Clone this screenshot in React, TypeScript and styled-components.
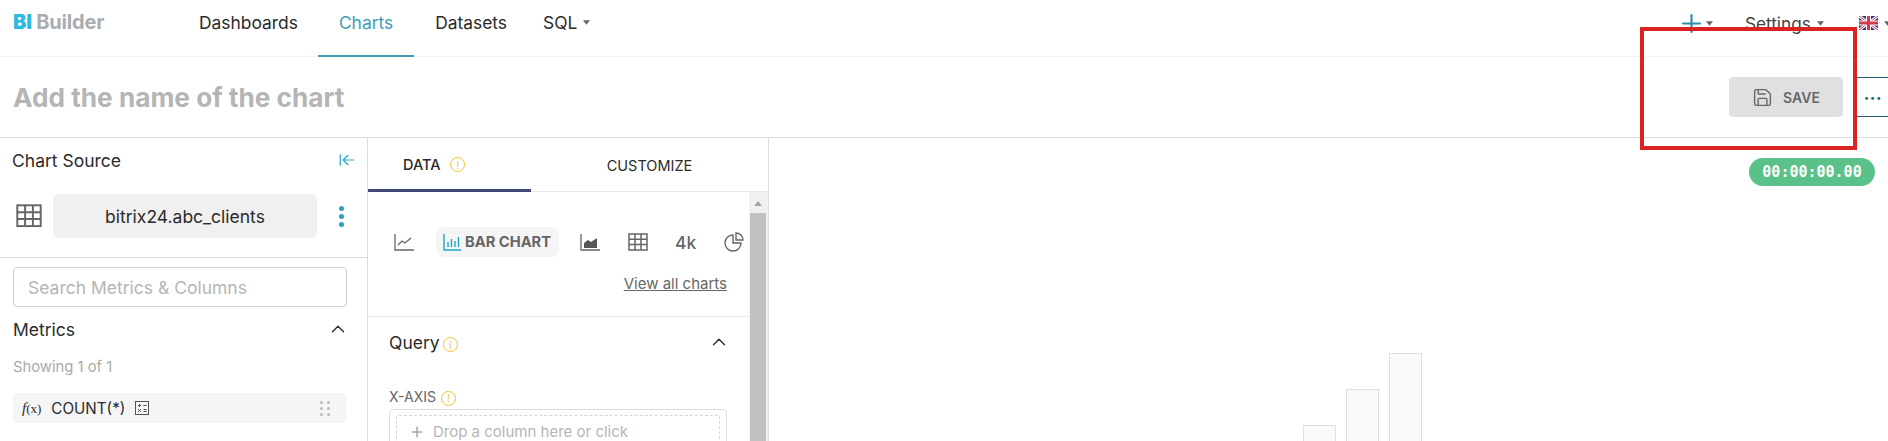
import React from 'react';
import styled, { createGlobalStyle } from 'styled-components';
import { ArrowLeftToLine, ChevronUp, Plus, Save } from 'lucide-react';

const GlobalStyle = createGlobalStyle`
  html, body {
    margin: 0;
    height: 441px;
    overflow: hidden;
    background: #fff;
    font-family: Inter, "Liberation Sans", sans-serif;
    color: #2b2b2b;
  }
  * { box-sizing: border-box; }
`;

const Caret = () => (
  <CaretSvg viewBox="0 0 8 5">
    <path d="M0 0h8L4 5z" fill="#666" />
  </CaretSvg>
);

const Hint: React.FC<{ mark?: string; gap?: number }> = ({ mark = '!', gap = 0 }) => (
  <HintBadge $gap={gap}>{mark}</HintBadge>
);

const TableGlyph: React.FC<{ size: number; color?: string }> = ({ size, color = '#666' }) => (
  <svg width={size} height={size * 0.9} viewBox="0 0 20 18" fill="none" stroke={color} strokeWidth="1.5">
    <rect x="1" y="1" width="18" height="16" />
    <path d="M1 6.3h18M1 11.6h18M7 1v16M13 1v16" />
  </svg>
);

const App: React.FC = () => (
  <Page>
    <GlobalStyle />
    <Nav>
      <Logo>
        <b>BI</b> Builder
      </Logo>
      <Menu>
        <MenuItem>Dashboards</MenuItem>
        <MenuItem $active>Charts</MenuItem>
        <MenuItem>Datasets</MenuItem>
        <MenuItem>
          SQL <Caret />
        </MenuItem>
      </Menu>
      <NavRight>
        <NavAction $width={62}>
          <PlusMark size={29} color="#2a8fb0" strokeWidth={1.8} />
          <Caret />
        </NavAction>
        <NavAction $width={114}>
          Settings <Caret />
        </NavAction>
        <NavAction $width={37}>
          <svg width="19" height="14" viewBox="0 0 19 14">
            <rect width="19" height="14" fill="#2b3a7a" />
            <path d="M0 0l19 14M19 0L0 14" stroke="#fff" strokeWidth="3" />
            <path d="M0 0l19 14M19 0L0 14" stroke="#d23b4b" strokeWidth="1" />
            <path d="M9.5 0v14M0 7h19" stroke="#fff" strokeWidth="5" />
            <path d="M9.5 0v14M0 7h19" stroke="#d23b4b" strokeWidth="3" />
          </svg>
          <Caret />
        </NavAction>
      </NavRight>
    </Nav>

    <TitleBar>
      <ChartTitle>Add the name of the chart</ChartTitle>
      <SaveButton>
        <Save size={21} strokeWidth={1.6} />
        SAVE
      </SaveButton>
      <MoreButton>•••</MoreButton>
    </TitleBar>

    <Workspace>
      <SourcePanel>
        <SourceTop>
          <SourceHead>
            Chart Source
            <ArrowLeftToLine size={18} color="#20a7c9" strokeWidth={1.6} />
          </SourceHead>
          <SourceRow>
            <TableGlyph size={26} />
            <SourcePill>bitrix24.abc_clients</SourcePill>
            <Kebab>
              <i />
              <i />
              <i />
            </Kebab>
          </SourceRow>
        </SourceTop>
        <SourceBody>
          <SearchBox placeholder="Search Metrics & Columns" />
          <MetricsHead>
            Metrics
            <ChevronUp size={22} strokeWidth={1.5} />
          </MetricsHead>
          <Showing>Showing 1 of 1</Showing>
          <MetricRow>
            <FxMark>
              <em>f</em>(x)
            </FxMark>
            COUNT(*)
            <svg width="14" height="14" viewBox="0 0 14 14" fill="none" stroke="#555" strokeWidth="1">
              <rect x="0.5" y="0.5" width="13" height="13" />
              <path d="M3 4.5h3M4.5 3v3M8.5 4.5h3M3 8l3 3M6 8l-3 3M8.5 8.5h3M8.5 10.5h3" />
            </svg>
            <DragDots>
              {Array.from({ length: 6 }).map((_, i) => (
                <i key={i} />
              ))}
            </DragDots>
          </MetricRow>
        </SourceBody>
      </SourcePanel>

      <ControlPanel>
        <Tabs>
          <Tab $active>
            DATA
            <Hint gap={10} />
          </Tab>
          <Tab>CUSTOMIZE</Tab>
        </Tabs>
        <ControlBody>
          <ControlScroll>
            <ChartTypes>
              <TypeRow>
                <TypeIcon $width={20} $gap={22}>
                  <svg width="20" height="17" viewBox="0 0 20 17" fill="none" stroke="#666" strokeWidth="1.3">
                    <path d="M1 0v16h19M4 11l4-4 3 2 6-5" />
                  </svg>
                </TypeIcon>
                <TypePill>
                  <svg width="18" height="17" viewBox="0 0 18 17" fill="none" stroke="#20a7c9" strokeWidth="1.4">
                    <path d="M1 0v16h17M5 13V8M8.5 13V5M12 13V7M15.500 13V3" />
                  </svg>
                  BAR CHART
                </TypePill>
                <TypeIcon $width={22} $gap={26}>
                  <svg width="20" height="17" viewBox="0 0 20 17">
                    <path d="M1 0v16h19" fill="none" stroke="#666" strokeWidth="1.3" />
                    <path d="M4 14V9l4-3 3 2 6-4v10z" fill="#555" />
                  </svg>
                </TypeIcon>
                <TypeIcon $width={21} $gap={26}>
                  <TableGlyph size={20} />
                </TypeIcon>
                <BigNumber>4k</BigNumber>
                <TypeIcon $width={20} $gap={0}>
                  <svg width="20" height="20" viewBox="0 0 20 20" fill="none" stroke="#666" strokeWidth="1.4">
                    <path d="M9 3a8 8 0 1 0 8 8H9z" />
                    <path d="M12 1a7 7 0 0 1 7 7h-7z" />
                  </svg>
                </TypeIcon>
              </TypeRow>
              <ViewAll>View all charts</ViewAll>
            </ChartTypes>
            <QuerySection>
              <QueryHead>
                <span>
                  Query
                  <Hint mark="i" gap={3} />
                </span>
                <ChevronUp size={22} strokeWidth={1.5} />
              </QueryHead>
              <FieldLabel>
                X-AXIS
                <Hint gap={5} />
              </FieldLabel>
              <DropBox>
                <DropInner>
                  <Plus size={16} strokeWidth={2.4} color="#aaa" />
                  Drop a column here or click
                </DropInner>
              </DropBox>
            </QuerySection>
          </ControlScroll>
          <Scrollbar>
            <ScrollArrow />
            <ScrollThumb />
          </Scrollbar>
        </ControlBody>
      </ControlPanel>

      <ChartPanel>
        <Timer>00:00:00.00</Timer>
        <Bars>
          <Bar $height={16} />
          <Bar $height={52} />
          <Bar $height={88} />
        </Bars>
      </ChartPanel>
    </Workspace>

    <RedFrame />
  </Page>
);

export default App;

const Page = styled.div`
  position: relative;
  width: 1888px;
  height: 441px;
  overflow: hidden;
`;
const CaretSvg = styled.svg`
  width: 7px;
  height: 5px;
  margin-left: 3px;
  flex: none;
`;
const PlusMark = styled(Plus)`
  flex: none;
  margin: 0 -6px;
`;
const HintBadge = styled.span<{ $gap: number }>`
  display: inline-flex;
  align-items: center;
  justify-content: center;
  width: 15px;
  height: 15px;
  border: 1.3px solid #f2c230;
  border-radius: 50%;
  color: #f2c230;
  font-size: 10px;
  font-weight: 400;
  line-height: 1;
  margin-left: ${(p) => p.$gap}px;
  vertical-align: 0;
`;
const Nav = styled.header`
  display: flex;
  align-items: stretch;
  height: 57px;
  border-bottom: 1px solid #f4f4f4;
  padding-left: 13px;
`;
const Logo = styled.div`
  width: 186px;
  padding-top: 10px;
  font-size: 20px;
  font-weight: 700;
  color: #a9adb2;
  letter-spacing: -0.2px;
  b {
    color: #2db9e0;
  }
`;
const Menu = styled.nav`
  display: flex;
  flex: 1;
`;
const MenuItem = styled.a<{ $active?: boolean }>`
  display: flex;
  align-items: center;
  gap: 3px;
  height: 57px;
  padding: 0 21px 10px;
  font-size: 17.4px;
  color: ${(p) => (p.$active ? '#3d9db5' : '#2b2b2b')};
  border-bottom: 2px solid ${(p) => (p.$active ? '#3d9db5' : 'transparent')};
  &:first-child {
    padding-left: 0;
    padding-right: 20px;
  }
  &:last-child {
    padding-left: 15px;
  }
`;
const NavRight = styled.div`
  display: flex;
  align-items: flex-start;
  padding-top: 13px;
  margin-right: -8px;
`;
const NavAction = styled.div<{ $width: number }>`
  display: flex;
  align-items: center;
  width: ${(p) => p.$width}px;
  height: 20px;
  font-size: 17.2px;
  color: #444;
  white-space: nowrap;
  gap: 3px;
`;
const TitleBar = styled.div`
  display: flex;
  align-items: center;
  height: 81px;
  border-bottom: 1px solid #dcdcdc;
  padding: 0 0 0 13px;
`;
const ChartTitle = styled.h1`
  flex: 1;
  margin: 0;
  font-size: 26.2px;
  font-weight: 700;
  color: #b5b5b5;
`;
const SaveButton = styled.button`
  display: flex;
  align-items: center;
  justify-content: center;
  gap: 10px;
  width: 114px;
  height: 40px;
  border: 0;
  border-radius: 4px;
  background: #e0e0e0;
  color: #666;
  font: 600 14px Inter, sans-serif;
`;
const MoreButton = styled.div`
  width: 35px;
  height: 40px;
  margin-left: 10px;
  padding: 0 0 0 10px;
  display: flex;
  align-items: center;
  border: 1px solid #1f5f72;
  border-right: 0;
  border-radius: 4px 0 0 4px;
  color: #1f5f72;
  font-size: 9px;
  letter-spacing: 1px;
`;
const Workspace = styled.main`
  display: flex;
  height: 303px;
`;
const SourcePanel = styled.section`
  width: 368px;
  flex: none;
  border-right: 1px solid #dcdcdc;
`;
const SourceTop = styled.div`
  height: 120px;
  border-bottom: 1px solid #dcdcdc;
  padding: 12px 11px 0 12px;
`;
const SourceHead = styled.div`
  display: flex;
  align-items: center;
  justify-content: space-between;
  height: 20px;
  font-size: 17.5px;
`;
const SourceRow = styled.div`
  display: flex;
  align-items: center;
  margin-top: 24px;
  padding-left: 4px;
`;
const SourcePill = styled.div`
  width: 264px;
  height: 44px;
  margin-left: 11px;
  display: flex;
  align-items: center;
  justify-content: center;
  border-radius: 6px;
  background: #f0f0f0;
  font-size: 17.5px;
`;
const Kebab = styled.div`
  display: flex;
  flex-direction: column;
  gap: 3px;
  margin-left: 22px;
  i {
    width: 5px;
    height: 5px;
    border-radius: 50%;
    background: #2a9fc4;
  }
`;
const SourceBody = styled.div`
  padding: 9px 20px 0 13px;
`;
const SearchBox = styled.input`
  display: block;
  width: 334px;
  height: 40px;
  border: 1px solid #d0d0d0;
  border-radius: 4px;
  padding: 0 14px;
  font: 17.5px Inter, sans-serif;
  &::placeholder {
    color: #b5b5b5;
  }
`;
const MetricsHead = styled.div`
  display: flex;
  align-items: center;
  justify-content: space-between;
  margin-top: 12px;
  height: 20px;
  width: 336px;
  font-size: 17.5px;
`;
const Showing = styled.div`
  margin-top: 19px;
  font-size: 14.8px;
  color: #aaa;
  height: 18px;
`;
const MetricRow = styled.div`
  display: flex;
  align-items: center;
  width: 333px;
  height: 30px;
  margin-top: 17px;
  padding: 0 16px 0 9px;
  gap: 10px;
  background: #f5f5f5;
  border-radius: 4px;
  font-size: 15.2px;
`;
const FxMark = styled.span`
  font: 13px "Liberation Serif", serif;
  em {
    font-size: 15px;
  }
`;
const DragDots = styled.div`
  display: grid;
  grid-template-columns: 3px 3px;
  gap: 3px 4px;
  margin-left: auto;
  i {
    width: 3px;
    height: 3px;
    border-radius: 50%;
    background: #bbb;
  }
`;
const ControlPanel = styled.section`
  width: 401px;
  flex: none;
  border-right: 1px solid #dcdcdc;
`;
const Tabs = styled.div`
  display: flex;
  height: 54px;
  border-bottom: 1px solid #e8e8e8;
`;
const Tab = styled.div<{ $active?: boolean }>`
  display: flex;
  align-items: center;
  justify-content: ${(p) => (p.$active ? 'flex-start' : 'center')};
  width: ${(p) => (p.$active ? '163px' : '237px')};
  height: 54px;
  padding-left: ${(p) => (p.$active ? '35px' : '0')};
  font-size: 14.5px;
  font-weight: ${(p) => (p.$active ? 500 : 400)};
  border-bottom: ${(p) => (p.$active ? '3px solid #3f4a75' : '0')};
  padding-bottom: ${(p) => (p.$active ? '0' : '2px')};
  padding-top: 2px;
`;
const ControlBody = styled.div`
  display: flex;
  height: 249px;
`;
const ControlScroll = styled.div`
  flex: 1;
  min-width: 0;
  overflow: hidden;
`;
const ChartTypes = styled.div`
  height: 125px;
  padding: 35px 22px 0 26px;
  border-bottom: 1px solid #ececec;
`;
const TypeRow = styled.div`
  display: flex;
  align-items: center;
  height: 30px;
`;
const TypeIcon = styled.div<{ $width: number; $gap: number }>`
  display: flex;
  width: ${(p) => p.$width}px;
  flex: none;
  margin-right: ${(p) => p.$gap}px;
`;
const TypePill = styled.div`
  display: flex;
  align-items: center;
  flex: none;
  gap: 4px;
  width: 123px;
  height: 30px;
  margin-right: 21px;
  padding-left: 7px;
  border-radius: 8px;
  background: #f5f5f5;
  color: #666;
  font-size: 14.7px;
  font-weight: 700;
  white-space: nowrap;
`;
const BigNumber = styled.div`
  flex: none;
  width: 22px;
  margin-right: 27px;
  color: #666;
  font-size: 17.5px;
  font-weight: 500;
`;
const ViewAll = styled.a`
  display: block;
  margin-top: 17px;
  text-align: right;
  color: #666;
  font-size: 15px;
  text-decoration: underline;
`;
const QuerySection = styled.div`
  padding: 14px 19px 0 21px;
`;
const QueryHead = styled.div`
  display: flex;
  align-items: center;
  justify-content: space-between;
  height: 22px;
  font-size: 17.5px;
`;
const FieldLabel = styled.div`
  margin-top: 35px;
  height: 16px;
  font-size: 14px;
  color: #666;
`;
const DropBox = styled.div`
  margin-top: 5px;
  height: 60px;
  margin-right: 3px;
  padding: 5px 6px;
  border: 1px solid #dcdcdc;
  border-radius: 4px;
`;
const DropInner = styled.div`
  display: flex;
  align-items: flex-start;
  gap: 8px;
  height: 60px;
  padding: 6px 12px;
  border: 1px dashed #d5d5d5;
  border-radius: 3px;
  color: #b5b5b5;
  font-size: 15px;
  svg {
    margin-top: 2px;
  }
`;
const Scrollbar = styled.div`
  display: flex;
  flex-direction: column;
  width: 19px;
  padding-right: 1px;
  background: #f1f1f1;
`;
const ScrollArrow = styled.div`
  width: 0;
  height: 0;
  margin: 9px auto 7px;
  border: 4px solid transparent;
  border-top: 0;
  border-bottom: 5px solid #a3a3a3;
`;
const ScrollThumb = styled.div`
  flex: 1;
  margin: 0 1px;
  background: #c1c1c1;
`;
const ChartPanel = styled.section`
  position: relative;
  flex: 1;
  overflow: hidden;
`;
const Timer = styled.div`
  position: absolute;
  top: 20px;
  right: 13px;
  width: 126px;
  height: 28px;
  display: flex;
  align-items: center;
  justify-content: center;
  border-radius: 14px;
  background: #5ac189;
  color: #fff;
  font: 600 15px "DejaVu Sans Mono", "Liberation Mono", monospace;
`;
const Bars = styled.div`
  display: flex;
  align-items: flex-end;
  gap: 10px;
  height: 100%;
  padding-left: 534px;
`;
const Bar = styled.div<{ $height: number }>`
  width: 33px;
  height: ${(p) => p.$height}px;
  background: #fafafa;
  border: 1px solid #e0e0e0;
  border-bottom: 0;
`;
const RedFrame = styled.div`
  position: absolute;
  left: 1640px;
  top: 27px;
  width: 217px;
  height: 123px;
  border: 4px solid #dc2323;
`;
